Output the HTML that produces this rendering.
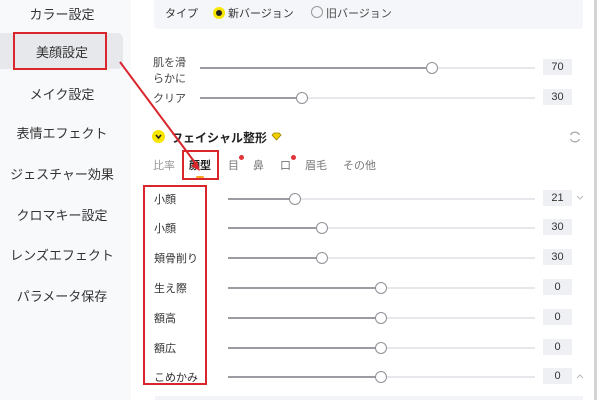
<!DOCTYPE html>
<html><head><meta charset="utf-8"><style>
*{margin:0;padding:0;box-sizing:border-box}
body{width:600px;height:400px;overflow:hidden;background:#fff;font-family:"Liberation Sans","Noto Sans CJK JP",sans-serif;color:#333;position:relative}
.side{position:absolute;left:0;top:0;width:131px;height:400px;background:#f8f9fb}
.si{position:absolute;left:0;width:124px;text-align:center;font-size:13px;color:#333}
.t{position:absolute;font-size:11px;color:#333;white-space:nowrap}
.track{position:absolute;height:2px;background:#e6e8ec}
.fill{position:absolute;left:0;top:0;height:2px;background:#9a9ca2}
.th{position:absolute;top:-5px;width:12px;height:12px;border:1.5px solid #8e9096;border-radius:50%;background:#fff;margin-left:-6px}
.val{position:absolute;left:543px;width:29px;height:16px;background:#eef0f4;font-size:11px;text-align:center;line-height:16px;color:#333}
.red{position:absolute;border:2px solid #d9262c}
.dot{position:absolute;width:5px;height:5px;border-radius:50%;background:#e0343a}
</style></head><body>
<div class="side"></div>
<div style="position:absolute;left:0;top:33px;width:123px;height:36px;background:#e7e8ec;border-radius:0 6px 6px 0"></div>
<div class="si" style="top:4px">カラー設定</div>
<div class="si" style="top:42px">美顔設定</div>
<div class="si" style="top:84px">メイク設定</div>
<div class="si" style="top:123px">表情エフェクト</div>
<div class="si" style="top:164px">ジェスチャー効果</div>
<div class="si" style="top:205px">クロマキー設定</div>
<div class="si" style="top:245px">レンズエフェクト</div>
<div class="si" style="top:286px">パラメータ保存</div>
<div class="red" style="left:13px;top:32px;width:94px;height:38px"></div>

<div style="position:absolute;left:154px;top:0;width:429px;height:29px;background:#f5f6f9;border-radius:0 0 4px 4px"></div>
<div class="t" style="left:165px;top:5px">タイプ</div>
<div style="position:absolute;left:213px;top:7px;width:12px;height:12px;border-radius:50%;background:#f7e600"></div>
<div style="position:absolute;left:216px;top:10px;width:6px;height:6px;border-radius:50%;background:#222"></div>
<div class="t" style="left:228px;top:5px">新バージョン</div>
<div style="position:absolute;left:311px;top:6px;width:12px;height:12px;border-radius:50%;border:1px solid #999"></div>
<div class="t" style="left:326px;top:5px;color:#444">旧バージョン</div>

<div class="t" style="left:153px;top:55px;line-height:16px;color:#444">肌を滑<br>らかに</div>
<div class="track" style="left:200px;top:67px;width:335px"><div class="fill" style="width:232px"></div><div class="th" style="left:232px"></div></div>
<div class="val" style="top:59px">70</div>
<div class="t" style="left:153px;top:90px;color:#444">クリア</div>
<div class="track" style="left:200px;top:97px;width:335px"><div class="fill" style="width:102px"></div><div class="th" style="left:102px"></div></div>
<div class="val" style="top:89px">30</div>

<div style="position:absolute;left:152px;top:130px;width:13px;height:13px;border-radius:50%;background:#f7e600"></div>
<svg style="position:absolute;left:154px;top:132px" width="9" height="9"><path d="M2 3l2.5 3L7 3" stroke="#222" stroke-width="1.6" fill="none"/></svg>
<div class="t" style="left:171px;top:129px;font-size:12px;font-weight:bold;color:#222">フェイシャル整形</div>
<svg style="position:absolute;left:271px;top:132px" width="11" height="9"><path d="M1 3l2-2h5l2 2-4.5 5z" fill="#f0d000" stroke="#9a8000" stroke-width=".8"/></svg>
<svg style="position:absolute;left:568px;top:130px" width="14" height="14"><path d="M11.5 5A5 5 0 0 0 2.5 5M2.5 9A5 5 0 0 0 11.5 9" stroke="#aaa" stroke-width="1.3" fill="none"/></svg>

<div class="t" style="left:153px;top:157px;color:#999">比率</div>
<div class="t" style="left:189px;top:157px;font-weight:bold;color:#222">顔型</div>
<div style="position:absolute;left:196px;top:176px;width:8px;height:3px;border-radius:2px;background:#f5a623"></div>
<div class="red" style="left:182px;top:150px;width:37px;height:30px"></div>
<div class="t" style="left:228px;top:157px;color:#777">目</div><div class="dot" style="left:239px;top:155px"></div>
<div class="t" style="left:253px;top:157px;color:#777">鼻</div>
<div class="t" style="left:280px;top:157px;color:#777">口</div><div class="dot" style="left:291px;top:155px"></div>
<div class="t" style="left:305px;top:157px;color:#777">眉毛</div>
<div class="t" style="left:343px;top:157px;color:#777">その他</div>

<div class="t" style="left:154px;top:191px">小顔</div>
<div class="track" style="left:228px;top:198px;width:307px"><div class="fill" style="width:67px"></div><div class="th" style="left:67px"></div></div>
<div class="val" style="top:190px">21</div>
<div class="t" style="left:154px;top:220px">小顔</div>
<div class="track" style="left:228px;top:227px;width:307px"><div class="fill" style="width:94px"></div><div class="th" style="left:94px"></div></div>
<div class="val" style="top:219px">30</div>
<div class="t" style="left:154px;top:250px">頬骨削り</div>
<div class="track" style="left:228px;top:257px;width:307px"><div class="fill" style="width:94px"></div><div class="th" style="left:94px"></div></div>
<div class="val" style="top:249px">30</div>
<div class="t" style="left:154px;top:280px">生え際</div>
<div class="track" style="left:228px;top:287px;width:307px"><div class="fill" style="width:153px"></div><div class="th" style="left:153px"></div></div>
<div class="val" style="top:279px">0</div>
<div class="t" style="left:154px;top:310px">額高</div>
<div class="track" style="left:228px;top:317px;width:307px"><div class="fill" style="width:153px"></div><div class="th" style="left:153px"></div></div>
<div class="val" style="top:309px">0</div>
<div class="t" style="left:154px;top:340px">額広</div>
<div class="track" style="left:228px;top:347px;width:307px"><div class="fill" style="width:153px"></div><div class="th" style="left:153px"></div></div>
<div class="val" style="top:339px">0</div>
<div class="t" style="left:154px;top:369px">こめかみ</div>
<div class="track" style="left:228px;top:376px;width:307px"><div class="fill" style="width:153px"></div><div class="th" style="left:153px"></div></div>
<div class="val" style="top:368px">0</div>
<svg style="position:absolute;left:576px;top:195px" width="8" height="6"><path d="M1 1l3 3 3-3" stroke="#bbb" fill="none"/></svg>
<svg style="position:absolute;left:576px;top:373px" width="8" height="6"><path d="M1 5l3-3 3 3" stroke="#bbb" fill="none"/></svg>
<div class="red" style="left:143px;top:185px;width:64px;height:200px"></div>
<div style="position:absolute;left:155px;top:396px;width:428px;height:4px;background:#f3f4f7"></div>
<div style="position:absolute;left:594px;top:0;width:3px;height:400px;background:#d4d4d6"></div>

<svg style="position:absolute;left:0;top:0" width="600" height="400"><line x1="120" y1="62" x2="196" y2="164" stroke="#d9262c" stroke-width="2"/><path d="M200 171l-9-5 6-5z" fill="#d9262c"/></svg>
</body></html>
